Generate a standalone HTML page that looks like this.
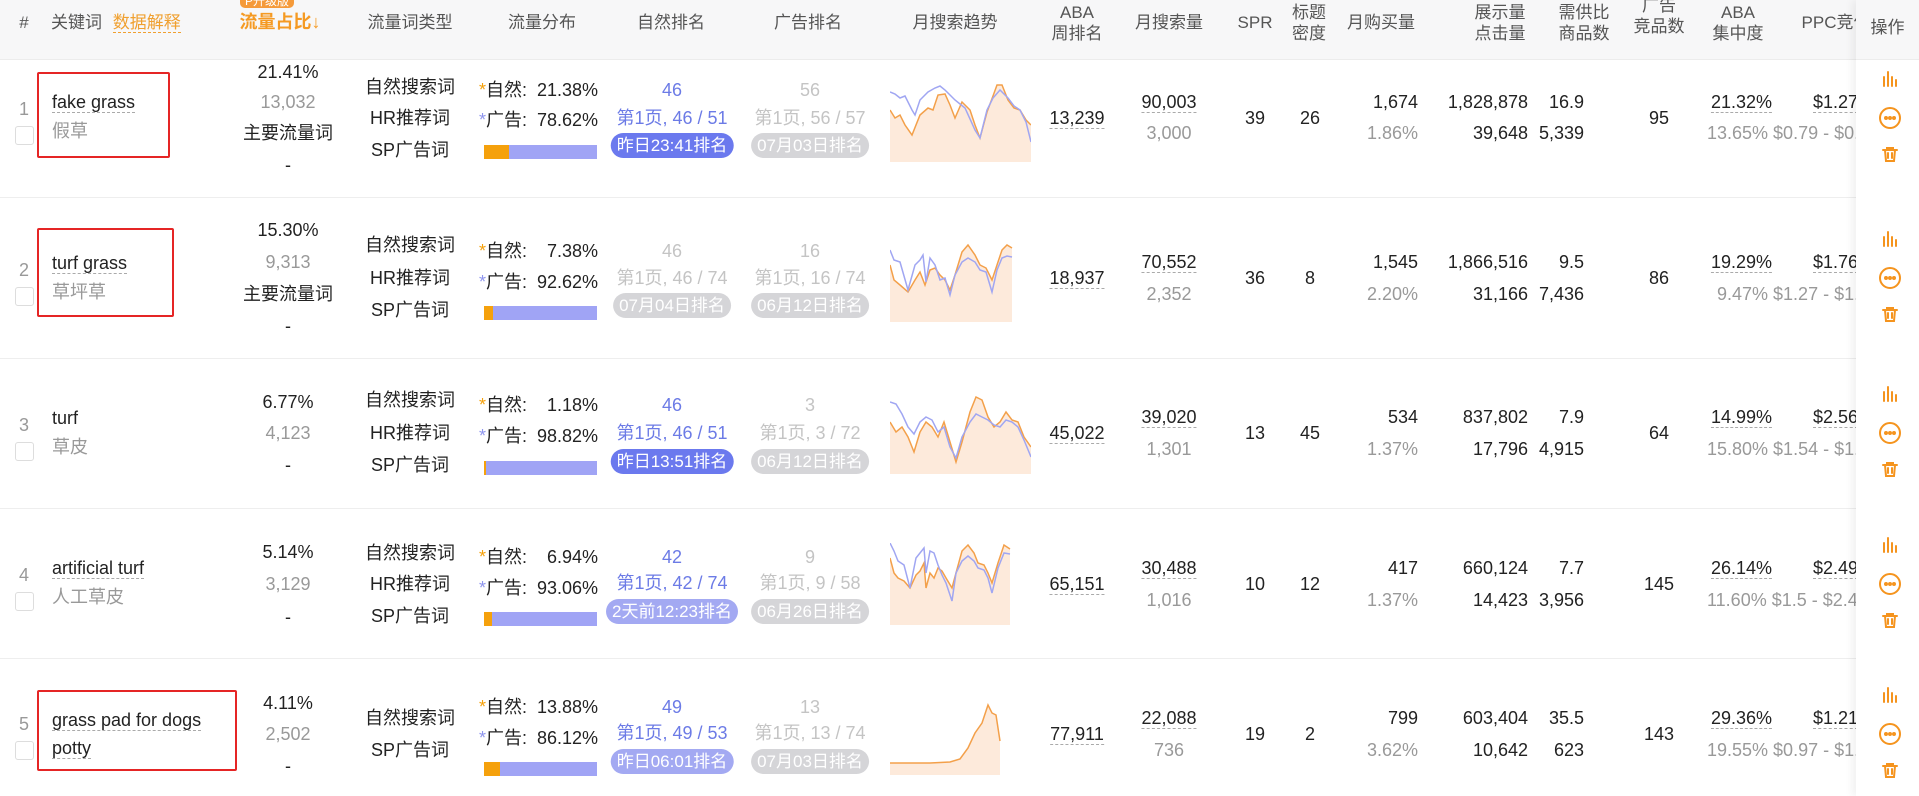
<!DOCTYPE html>
<html><head><meta charset="utf-8"><style>
*{margin:0;padding:0;box-sizing:border-box}
body{width:1919px;height:796px;overflow:hidden;background:#fff;font-family:"Liberation Sans","Noto Sans CJK SC",sans-serif;font-size:18px;color:#222;position:relative}
.hd{position:absolute;left:0;top:0;width:1919px;height:60px;background:#f7f7f8;border-bottom:1px solid #ececec}
.h{position:absolute;font-size:17px;color:#555;text-align:center;line-height:21px;transform:translateX(-50%);white-space:nowrap}
.row{position:absolute;left:0;width:1919px;border-bottom:1px solid #eee}
.t{position:absolute;white-space:nowrap;line-height:20px;transform:translate(-50%,-50%)}
.l{position:absolute;white-space:nowrap;line-height:20px;transform:translateY(-50%)}
.r{position:absolute;white-space:nowrap;line-height:20px;transform:translate(-100%,-50%)}
.g{color:#999}
.b{color:#6c7be6}
.lg{color:#c4c4c4}
.u{border-bottom:1px dashed #aaa}
.pill{position:absolute;height:25px;border-radius:13px;color:#fff;font-size:17px;line-height:25px;text-align:center;transform:translateX(-50%);white-space:nowrap;padding:0 6px}
.pb{background:#6b79ee}.pl{background:#a3a9f2}.pg{background:#d5d5d8}
.bar{position:absolute;left:484px;width:113px;height:14px;background:#a0a4f5}
.bar i{display:block;height:14px;background:#f5a10c}
.st{color:#f5a10c}.sp{color:#8f96ee}
.box{position:absolute;border:2px solid #e52525;border-radius:2px}
.cb{position:absolute;left:15px;width:19px;height:19px;border:1px solid #ddd;border-radius:3px;background:#fff}
.ops{position:absolute;left:1856px;top:0;width:63px;height:796px;background:#fff;box-shadow:-4px 0 8px rgba(0,0,0,.06)}
svg.ch{position:absolute;left:890px;width:141px;height:82px}
</style></head><body>
<div class="hd"></div>
<div class="h" style="left:24px;top:12px">#</div>
<div class="h" style="left:51px;top:12px;transform:none">关键词 <span style="color:#f0a030;border-bottom:1px dashed #f0a030;margin-left:6px">数据解释</span></div>
<div style="position:absolute;left:240px;top:-8px;width:54px;height:16px;background:#f59a3a;border-radius:5px;color:#fff;font-size:12px;text-align:center;line-height:18px">P升级版</div>
<div class="h" style="left:280px;top:12px;color:#f59a23;font-weight:bold;font-size:18px">流量占比↓</div>
<div class="h" style="left:410px;top:12px">流量词类型</div>
<div class="h" style="left:542px;top:12px">流量分布</div>
<div class="h" style="left:671px;top:12px">自然排名</div>
<div class="h" style="left:808px;top:12px">广告排名</div>
<div class="h" style="left:955px;top:12px">月搜索趋势</div>
<div class="h" style="left:1077px;top:2px">ABA<br>周排名</div>
<div class="h" style="left:1169px;top:12px">月搜索量</div>
<div class="h" style="left:1255px;top:12px">SPR</div>
<div class="h" style="left:1309px;top:2px">标题<br>密度</div>
<div class="h" style="left:1381px;top:12px">月购买量</div>
<div class="h" style="left:1500px;top:2px">展示量<br>点击量</div>
<div class="h" style="left:1584px;top:2px">需供比<br>商品数</div>
<div class="h" style="left:1659px;top:-5px">广告<br>竞品数</div>
<div class="h" style="left:1738px;top:2px">ABA<br>集中度</div>
<div class="h" style="left:1836px;top:12px">PPC竞价</div>

<!-- Row 1 -->
<div class="row" style="top:60px;height:138px"></div>
<div class="t g" style="left:24px;top:109px">1</div><div class="cb" style="top:126px"></div>
<div class="box" style="left:37px;top:72px;width:133px;height:86px"></div>
<div class="l" style="left:52px;top:102px"><span class="u">fake grass</span></div>
<div class="l g" style="left:52px;top:131px">假草</div>
<div class="t" style="left:288px;top:72px">21.41%</div>
<div class="t g" style="left:288px;top:102px">13,032</div>
<div class="t" style="left:288px;top:133px">主要流量词</div>
<div class="t" style="left:288px;top:165px">-</div>
<div class="t" style="left:410px;top:87px">自然搜索词</div>
<div class="t" style="left:410px;top:118px">HR推荐词</div>
<div class="t" style="left:410px;top:150px">SP广告词</div>
<div class="l" style="left:479px;top:90px"><span class="st">*</span>自然:&nbsp; 21.38%</div>
<div class="l" style="left:479px;top:120px"><span class="sp">*</span>广告:&nbsp; 78.62%</div>
<div class="bar" style="top:145px"><i style="width:25px"></i></div>
<div class="t b" style="left:672px;top:90px">46</div>
<div class="t b" style="left:672px;top:118px">第1页, 46 / 51</div>
<div class="pill pb" style="left:672px;top:133px">昨日23:41排名</div>
<div class="t lg" style="left:810px;top:90px">56</div>
<div class="t lg" style="left:810px;top:118px">第1页, 56 / 57</div>
<div class="pill pg" style="left:810px;top:133px">07月03日排名</div>
<svg class="ch" style="top:80px" viewBox="0 0 141 82"><path d="M0,30 5,38 10,35 15,45 22,55 30,35 38,28 43,30 48,15 55,14 60,25 65,38 72,22 80,30 85,45 90,58 97,32 103,16 107,5 112,5 118,20 124,28 130,30 136,40 141,45 V82 H0Z" fill="#fdeadb"/><path d="M0,30 5,38 10,35 15,45 22,55 30,35 38,28 43,30 48,15 55,14 60,25 65,38 72,22 80,30 85,45 90,58 97,32 103,16 107,5 112,5 118,20 124,28 130,30 136,40 141,45" fill="none" stroke="#f3a04a" stroke-width="1.5"/><path d="M0,12 5,14 10,18 15,16 22,30 25,35 30,20 38,12 45,8 50,6 55,10 60,15 65,20 70,24 75,28 85,50 90,58 97,30 103,18 110,10 118,18 124,26 130,30 136,42 141,62" fill="none" stroke="#a0a6f2" stroke-width="1.5"/></svg>
<div class="t" style="left:1077px;top:118px"><span class="u">13,239</span></div>
<div class="t" style="left:1169px;top:102px"><span class="u">90,003</span></div>
<div class="t g" style="left:1169px;top:133px">3,000</div>
<div class="t" style="left:1255px;top:118px">39</div>
<div class="t" style="left:1310px;top:118px">26</div>
<div class="r" style="left:1418px;top:102px">1,674</div>
<div class="r g" style="left:1418px;top:133px">1.86%</div>
<div class="r" style="left:1528px;top:102px">1,828,878</div>
<div class="r" style="left:1528px;top:133px">39,648</div>
<div class="r" style="left:1584px;top:102px">16.9</div>
<div class="r" style="left:1584px;top:133px">5,339</div>
<div class="t" style="left:1659px;top:118px">95</div>
<div class="r" style="left:1772px;top:102px"><span class="u">21.32%</span></div>
<div class="l g" style="left:1707px;top:133px">13.65% $0.79 - $0.99</div>
<div class="l" style="left:1813px;top:102px"><span class="u">$1.27</span></div>

<!-- Row 2 -->
<div class="row" style="top:198px;height:161px"></div>
<div class="t g" style="left:24px;top:270px">2</div><div class="cb" style="top:287px"></div>
<div class="box" style="left:37px;top:228px;width:137px;height:89px"></div>
<div class="l" style="left:52px;top:263px"><span class="u">turf grass</span></div>
<div class="l g" style="left:52px;top:292px">草坪草</div>
<div class="t" style="left:288px;top:230px">15.30%</div>
<div class="t g" style="left:288px;top:262px">9,313</div>
<div class="t" style="left:288px;top:294px">主要流量词</div>
<div class="t" style="left:288px;top:326px">-</div>
<div class="t" style="left:410px;top:245px">自然搜索词</div>
<div class="t" style="left:410px;top:278px">HR推荐词</div>
<div class="t" style="left:410px;top:310px">SP广告词</div>
<div class="l" style="left:479px;top:251px"><span class="st">*</span>自然:&nbsp;&nbsp;&nbsp; 7.38%</div>
<div class="l" style="left:479px;top:282px"><span class="sp">*</span>广告:&nbsp; 92.62%</div>
<div class="bar" style="top:306px"><i style="width:9px"></i></div>
<div class="t lg" style="left:672px;top:251px">46</div>
<div class="t lg" style="left:672px;top:278px">第1页, 46 / 74</div>
<div class="pill pg" style="left:672px;top:293px">07月04日排名</div>
<div class="t lg" style="left:810px;top:251px">16</div>
<div class="t lg" style="left:810px;top:278px">第1页, 16 / 74</div>
<div class="pill pg" style="left:810px;top:293px">06月12日排名</div>
<svg class="ch" style="top:240px" viewBox="0 0 141 82"><path d="M0,25 4,40 10,45 18,52 25,40 30,32 35,45 40,30 45,28 50,35 55,40 60,50 65,35 72,12 78,5 85,15 90,25 96,28 102,40 107,25 112,10 117,5 122,8 V82 H0Z" fill="#fdeadb"/><path d="M0,25 4,40 10,45 18,52 25,40 30,32 35,45 40,30 45,28 50,35 55,40 60,50 65,35 72,12 78,5 85,15 90,25 96,28 102,40 107,25 112,10 117,5 122,8" fill="none" stroke="#f3a04a" stroke-width="1.5"/><path d="M0,10 4,20 10,22 18,50 25,25 30,20 33,15 36,42 40,18 45,25 50,40 55,38 60,55 65,35 72,22 78,18 85,22 90,30 96,32 102,52 107,30 112,18 117,16 122,17" fill="none" stroke="#a0a6f2" stroke-width="1.5"/></svg>
<div class="t" style="left:1077px;top:278px"><span class="u">18,937</span></div>
<div class="t" style="left:1169px;top:262px"><span class="u">70,552</span></div>
<div class="t g" style="left:1169px;top:294px">2,352</div>
<div class="t" style="left:1255px;top:278px">36</div>
<div class="t" style="left:1310px;top:278px">8</div>
<div class="r" style="left:1418px;top:262px">1,545</div>
<div class="r g" style="left:1418px;top:294px">2.20%</div>
<div class="r" style="left:1528px;top:262px">1,866,516</div>
<div class="r" style="left:1528px;top:294px">31,166</div>
<div class="r" style="left:1584px;top:262px">9.5</div>
<div class="r" style="left:1584px;top:294px">7,436</div>
<div class="t" style="left:1659px;top:278px">86</div>
<div class="r" style="left:1772px;top:262px"><span class="u">19.29%</span></div>
<div class="l g" style="left:1717px;top:294px">9.47% $1.27 - $1.99</div>
<div class="l" style="left:1813px;top:262px"><span class="u">$1.76</span></div>

<!-- Row 3 -->
<div class="row" style="top:359px;height:150px"></div>
<div class="t g" style="left:24px;top:425px">3</div><div class="cb" style="top:442px"></div>
<div class="l" style="left:52px;top:418px">turf</div>
<div class="l g" style="left:52px;top:447px">草皮</div>
<div class="t" style="left:288px;top:402px">6.77%</div>
<div class="t g" style="left:288px;top:433px">4,123</div>
<div class="t" style="left:288px;top:465px">-</div>
<div class="t" style="left:410px;top:400px">自然搜索词</div>
<div class="t" style="left:410px;top:433px">HR推荐词</div>
<div class="t" style="left:410px;top:465px">SP广告词</div>
<div class="l" style="left:479px;top:405px"><span class="st">*</span>自然:&nbsp;&nbsp;&nbsp; 1.18%</div>
<div class="l" style="left:479px;top:436px"><span class="sp">*</span>广告:&nbsp; 98.82%</div>
<div class="bar" style="top:461px"><i style="width:2px"></i></div>
<div class="t b" style="left:672px;top:405px">46</div>
<div class="t b" style="left:672px;top:433px">第1页, 46 / 51</div>
<div class="pill pb" style="left:672px;top:449px">昨日13:51排名</div>
<div class="t lg" style="left:810px;top:405px">3</div>
<div class="t lg" style="left:810px;top:433px">第1页, 3 / 72</div>
<div class="pill pg" style="left:810px;top:449px">06月12日排名</div>
<svg class="ch" style="top:392px" viewBox="0 0 141 82"><path d="M0,30 6,40 12,35 18,45 24,60 30,40 36,30 42,35 48,45 54,30 60,50 66,70 72,50 80,20 86,5 92,8 98,25 104,35 110,30 116,20 122,28 128,30 134,45 141,55 V82 H0Z" fill="#fdeadb"/><path d="M0,30 6,40 12,35 18,45 24,60 30,40 36,30 42,35 48,45 54,30 60,50 66,70 72,50 80,20 86,5 92,8 98,25 104,35 110,30 116,20 122,28 128,30 134,45 141,55" fill="none" stroke="#f3a04a" stroke-width="1.5"/><path d="M0,10 6,12 12,22 18,35 24,42 30,30 36,25 42,28 48,40 54,35 60,55 66,66 72,45 80,30 86,22 92,25 98,28 104,33 110,35 116,28 122,30 128,35 134,48 141,65" fill="none" stroke="#a0a6f2" stroke-width="1.5"/></svg>
<div class="t" style="left:1077px;top:433px"><span class="u">45,022</span></div>
<div class="t" style="left:1169px;top:417px"><span class="u">39,020</span></div>
<div class="t g" style="left:1169px;top:449px">1,301</div>
<div class="t" style="left:1255px;top:433px">13</div>
<div class="t" style="left:1310px;top:433px">45</div>
<div class="r" style="left:1418px;top:417px">534</div>
<div class="r g" style="left:1418px;top:449px">1.37%</div>
<div class="r" style="left:1528px;top:417px">837,802</div>
<div class="r" style="left:1528px;top:449px">17,796</div>
<div class="r" style="left:1584px;top:417px">7.9</div>
<div class="r" style="left:1584px;top:449px">4,915</div>
<div class="t" style="left:1659px;top:433px">64</div>
<div class="r" style="left:1772px;top:417px"><span class="u">14.99%</span></div>
<div class="l g" style="left:1707px;top:449px">15.80% $1.54 - $1.99</div>
<div class="l" style="left:1813px;top:417px"><span class="u">$2.56</span></div>

<!-- Row 4 -->
<div class="row" style="top:509px;height:150px"></div>
<div class="t g" style="left:24px;top:575px">4</div><div class="cb" style="top:592px"></div>
<div class="l" style="left:52px;top:568px"><span class="u">artificial turf</span></div>
<div class="l g" style="left:52px;top:597px">人工草皮</div>
<div class="t" style="left:288px;top:552px">5.14%</div>
<div class="t g" style="left:288px;top:584px">3,129</div>
<div class="t" style="left:288px;top:617px">-</div>
<div class="t" style="left:410px;top:553px">自然搜索词</div>
<div class="t" style="left:410px;top:584px">HR推荐词</div>
<div class="t" style="left:410px;top:616px">SP广告词</div>
<div class="l" style="left:479px;top:557px"><span class="st">*</span>自然:&nbsp;&nbsp;&nbsp; 6.94%</div>
<div class="l" style="left:479px;top:588px"><span class="sp">*</span>广告:&nbsp; 93.06%</div>
<div class="bar" style="top:612px"><i style="width:8px"></i></div>
<div class="t b" style="left:672px;top:557px">42</div>
<div class="t b" style="left:672px;top:583px">第1页, 42 / 74</div>
<div class="pill pl" style="left:672px;top:599px">2天前12:23排名</div>
<div class="t lg" style="left:810px;top:557px">9</div>
<div class="t lg" style="left:810px;top:583px">第1页, 9 / 58</div>
<div class="pill pg" style="left:810px;top:599px">06月26日排名</div>
<svg class="ch" style="top:543px" viewBox="0 0 141 82"><path d="M0,15 4,30 8,35 14,38 20,45 26,32 30,28 34,20 36,45 40,30 44,35 48,25 52,28 56,35 62,45 66,30 72,8 78,2 84,10 88,20 94,22 98,30 102,40 108,20 114,2 120,6 V82 H0Z" fill="#fdeadb"/><path d="M0,15 4,30 8,35 14,38 20,45 26,32 30,28 34,20 36,45 40,30 44,35 48,25 52,28 56,35 62,45 66,30 72,8 78,2 84,10 88,20 94,22 98,30 102,40 108,20 114,2 120,6" fill="none" stroke="#f3a04a" stroke-width="1.5"/><path d="M0,0 4,8 8,18 14,22 20,45 26,15 30,10 34,5 36,30 40,8 44,10 48,22 52,32 56,40 62,58 66,30 72,18 78,13 84,18 88,25 94,27 98,35 102,50 108,25 114,10 120,11" fill="none" stroke="#a0a6f2" stroke-width="1.5"/></svg>
<div class="t" style="left:1077px;top:584px"><span class="u">65,151</span></div>
<div class="t" style="left:1169px;top:568px"><span class="u">30,488</span></div>
<div class="t g" style="left:1169px;top:600px">1,016</div>
<div class="t" style="left:1255px;top:584px">10</div>
<div class="t" style="left:1310px;top:584px">12</div>
<div class="r" style="left:1418px;top:568px">417</div>
<div class="r g" style="left:1418px;top:600px">1.37%</div>
<div class="r" style="left:1528px;top:568px">660,124</div>
<div class="r" style="left:1528px;top:600px">14,423</div>
<div class="r" style="left:1584px;top:568px">7.7</div>
<div class="r" style="left:1584px;top:600px">3,956</div>
<div class="t" style="left:1659px;top:584px">145</div>
<div class="r" style="left:1772px;top:568px"><span class="u">26.14%</span></div>
<div class="l g" style="left:1707px;top:600px">11.60% $1.5 - $2.49</div>
<div class="l" style="left:1813px;top:568px"><span class="u">$2.49</span></div>

<!-- Row 5 -->
<div class="row" style="top:659px;height:137px;border:none"></div>
<div class="t g" style="left:24px;top:724px">5</div><div class="cb" style="top:741px"></div>
<div class="box" style="left:37px;top:690px;width:200px;height:81px"></div>
<div class="l" style="left:52px;top:720px"><span class="u">grass pad for dogs</span></div>
<div class="l" style="left:52px;top:748px"><span class="u">potty</span></div>
<div class="t" style="left:288px;top:703px">4.11%</div>
<div class="t g" style="left:288px;top:734px">2,502</div>
<div class="t" style="left:288px;top:766px">-</div>
<div class="t" style="left:410px;top:718px">自然搜索词</div>
<div class="t" style="left:410px;top:750px">SP广告词</div>
<div class="l" style="left:479px;top:707px"><span class="st">*</span>自然:&nbsp; 13.88%</div>
<div class="l" style="left:479px;top:738px"><span class="sp">*</span>广告:&nbsp; 86.12%</div>
<div class="bar" style="top:762px"><i style="width:16px"></i></div>
<div class="t b" style="left:672px;top:707px">49</div>
<div class="t b" style="left:672px;top:733px">第1页, 49 / 53</div>
<div class="pill pl" style="left:672px;top:749px">昨日06:01排名</div>
<div class="t lg" style="left:810px;top:707px">13</div>
<div class="t lg" style="left:810px;top:733px">第1页, 13 / 74</div>
<div class="pill pg" style="left:810px;top:749px">07月03日排名</div>
<svg class="ch" style="top:693px" viewBox="0 0 141 82"><path d="M0,70 20,70 40,70 60,69 70,66 78,55 85,40 92,30 98,12 102,20 106,22 110,48 V82 H0Z" fill="#fdeadb"/><path d="M0,70 20,70 40,70 60,69 70,66 78,55 85,40 92,30 98,12 102,20 106,22 110,48" fill="none" stroke="#f3a04a" stroke-width="1.5"/></svg>
<div class="t" style="left:1077px;top:734px"><span class="u">77,911</span></div>
<div class="t" style="left:1169px;top:718px"><span class="u">22,088</span></div>
<div class="t g" style="left:1169px;top:750px">736</div>
<div class="t" style="left:1255px;top:734px">19</div>
<div class="t" style="left:1310px;top:734px">2</div>
<div class="r" style="left:1418px;top:718px">799</div>
<div class="r g" style="left:1418px;top:750px">3.62%</div>
<div class="r" style="left:1528px;top:718px">603,404</div>
<div class="r" style="left:1528px;top:750px">10,642</div>
<div class="r" style="left:1584px;top:718px">35.5</div>
<div class="r" style="left:1584px;top:750px">623</div>
<div class="t" style="left:1659px;top:734px">143</div>
<div class="r" style="left:1772px;top:718px"><span class="u">29.36%</span></div>
<div class="l g" style="left:1707px;top:750px">19.55% $0.97 - $1.49</div>
<div class="l" style="left:1813px;top:718px"><span class="u">$1.21</span></div>

<!-- ops column -->
<div class="ops">
<div style="height:60px;background:#f7f7f8;border-bottom:1px solid #ececec;text-align:center;line-height:56px;font-size:17px;color:#555">操作</div>
</div>
<svg style="position:absolute;left:1856px;top:60px" width="63" height="736" viewBox="0 0 63 736">
<g fill="none" stroke="#f5941e" stroke-width="2" stroke-linecap="round">
<g transform="translate(0,0)"><path d="M28,17v9M32,12v14M36,17v9M40,20v6"/><circle cx="34" cy="58" r="10"/><circle cx="30" cy="58" r="1" fill="#f5941e"/><circle cx="34" cy="58" r="1" fill="#f5941e"/><circle cx="38" cy="58" r="1" fill="#f5941e"/><path d="M27,90h14M31,90v-2h6v2M29,90l1,11h8l1-11M32,93v5M36,93v5"/></g>
<g transform="translate(0,160)"><path d="M28,17v9M32,12v14M36,17v9M40,20v6"/><circle cx="34" cy="58" r="10"/><circle cx="30" cy="58" r="1" fill="#f5941e"/><circle cx="34" cy="58" r="1" fill="#f5941e"/><circle cx="38" cy="58" r="1" fill="#f5941e"/><path d="M27,90h14M31,90v-2h6v2M29,90l1,11h8l1-11M32,93v5M36,93v5"/></g>
<g transform="translate(0,315)"><path d="M28,17v9M32,12v14M36,17v9M40,20v6"/><circle cx="34" cy="58" r="10"/><circle cx="30" cy="58" r="1" fill="#f5941e"/><circle cx="34" cy="58" r="1" fill="#f5941e"/><circle cx="38" cy="58" r="1" fill="#f5941e"/><path d="M27,90h14M31,90v-2h6v2M29,90l1,11h8l1-11M32,93v5M36,93v5"/></g>
<g transform="translate(0,466)"><path d="M28,17v9M32,12v14M36,17v9M40,20v6"/><circle cx="34" cy="58" r="10"/><circle cx="30" cy="58" r="1" fill="#f5941e"/><circle cx="34" cy="58" r="1" fill="#f5941e"/><circle cx="38" cy="58" r="1" fill="#f5941e"/><path d="M27,90h14M31,90v-2h6v2M29,90l1,11h8l1-11M32,93v5M36,93v5"/></g>
<g transform="translate(0,616)"><path d="M28,17v9M32,12v14M36,17v9M40,20v6"/><circle cx="34" cy="58" r="10"/><circle cx="30" cy="58" r="1" fill="#f5941e"/><circle cx="34" cy="58" r="1" fill="#f5941e"/><circle cx="38" cy="58" r="1" fill="#f5941e"/><path d="M27,90h14M31,90v-2h6v2M29,90l1,11h8l1-11M32,93v5M36,93v5"/></g>
</g>
</svg>
</body></html>
